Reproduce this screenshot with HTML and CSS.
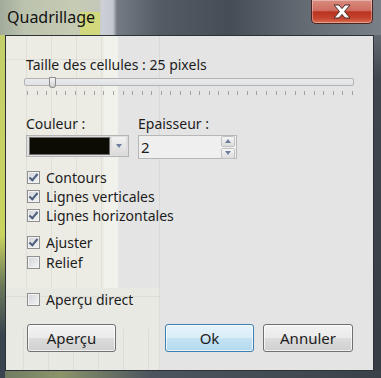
FILE: index.html
```html
<!DOCTYPE html>
<html lang="fr">
<head>
  <meta charset="UTF-8" />
  <title>Quadrillage</title>
  <link rel="stylesheet" href="styles.css">
</head>
<body>

  <div class="window">
    <div class="titlebar">
      <span class="title">Quadrillage</span>
      <div class="close">
        <svg width="22" height="15" viewBox="0 0 22 15">
          <path d="M3 1 L8 1 L11 4.6 L14 1 L19 1 L13.5 7.5 L19 14 L14 14 L11 10.4 L8 14 L3 14 L8.5 7.5 Z" fill="#fff" stroke="#4a2a26" stroke-width="1"/>
        </svg>
      </div>
    </div>

    <div class="client">
      <div class="label">Taille des cellules : 25 pixels</div>
      <div class="slider">
        <div class="track"></div>
        <div class="thumb"></div>
        <div class="ticks"></div>
      </div>

      <div class="fields">
        <div class="field color-field">
          <div class="label">Couleur :</div>
          <div class="combo">
            <div class="swatch"></div>
            <div class="drop"><span class="tri-down"></span></div>
          </div>
        </div>
        <div class="field">
          <div class="label">Epaisseur :</div>
          <div class="spin">
            <span class="value">2</span>
            <div class="spin-btns">
              <div class="spin-btn"><span class="tri-up"></span></div>
              <div class="spin-btn"><span class="tri-down"></span></div>
            </div>
          </div>
        </div>
      </div>

      <div class="checks">
        <label class="check"><span class="box on"></span>Contours</label>
        <label class="check"><span class="box on"></span>Lignes verticales</label>
        <label class="check"><span class="box on"></span>Lignes horizontales</label>
      </div>
      <div class="checks second">
        <label class="check"><span class="box on"></span>Ajuster</label>
        <label class="check"><span class="box"></span>Relief</label>
      </div>
      <div class="checks third">
        <label class="check"><span class="box"></span>Aperçu direct</label>
      </div>

      <div class="buttons">
        <button class="btn">Aperçu</button>
        <div class="right">
          <button class="btn default">Ok</button>
          <button class="btn">Annuler</button>
        </div>
      </div>
    </div>
  </div>

</body>
</html>
```

FILE: styles.css
```css
body {
  margin: 0;
  font-family: "Noto Sans", sans-serif;
  font-size: 14px;
  color: #1c1c1c;
}
.window {
  width: 381px;
  height: 378px;
  display: flex;
  flex-direction: column;
  background:
    linear-gradient(180deg, #c3cf6a 0, #c9d35e 200px, #6c7a5a 250px, #3a4450 300px) 0 35px / 5px 343px no-repeat,
    linear-gradient(90deg, #6f7a62 0, #8a946a 60px, #4c555d 150px, #3a4149 381px) 0 371px / 381px 7px no-repeat,
    linear-gradient(180deg, #7f858c 0, #3f464e 80px, #363d45 100%);
}
.titlebar {
  height: 35px;
  display: flex;
  align-items: flex-start;
  background:
    linear-gradient(#d2d87c, #d2d87c) 80px 12px / 20px 23px no-repeat,
    linear-gradient(90deg, #a2ab9c 0, #bcc3ae 25px, #c6cbb3 75px, #c4c8bb 100px, #cdd1d7 101px, #c3c7ce 113px, #747b83 117px, #535b64 160px, #454d56 230px, #626971 300px, #7a8088 381px);
}
.title {
  padding: 6px 0 0 7px;
  font-size: 16px;
  color: #111;
}
.close {
  margin-left: auto;
  margin-right: 8px;
  width: 60px;
  height: 23px;
  border: 1px solid #4a2420;
  border-top: none;
  border-radius: 0 0 5px 5px;
  box-shadow: inset 0 0 0 1px rgba(255, 255, 255, 0.35);
  background: linear-gradient(180deg, #d98a7e 0, #cf6f62 45%, #b9331f 52%, #c64530 80%, #dc6f52 100%);
  display: flex;
  align-items: center;
  justify-content: center;
}
.client {
  flex: 1;
  margin: 0 7px 7px 5px;
  border: 1px solid #2c3238;
  padding: 21px 20px 0 20px;
  display: flex;
  flex-direction: column;
  background:
    linear-gradient(rgba(255, 255, 255, 0.3), rgba(255, 255, 255, 0.3)) 98px 0 / 14px 252px no-repeat,
    repeating-linear-gradient(90deg, transparent 0 20px, rgba(0, 0, 0, 0.05) 20px 21px, transparent 21px 25px) 0 0 / 98px 252px no-repeat,
    linear-gradient(rgba(0, 0, 0, 0.05), rgba(0, 0, 0, 0.05)) 0 23px / 98px 1px no-repeat,
    linear-gradient(#ecece5, #ecece5) 0 0 / 112px 252px no-repeat,
    linear-gradient(rgba(0, 0, 0, 0.05), rgba(0, 0, 0, 0.05)) 0 260px / 154px 1px no-repeat,
    linear-gradient(rgba(0, 0, 0, 0.05), rgba(0, 0, 0, 0.05)) 153px 0 / 1px 335px no-repeat,
    repeating-linear-gradient(90deg, transparent 0 17px, rgba(0, 0, 0, 0.05) 17px 18px, transparent 18px 25px) 0 293px / 154px 42px no-repeat,
    linear-gradient(#e9e9e4, #e9e9e4) 0 252px / 154px 83px no-repeat,
    #e4e4e4;
}
.label {
  line-height: 16px;
}
.slider {
  position: relative;
  margin: 5px 0 0 -2px;
  width: 330px;
  height: 20px;
}
.track {
  height: 6px;
  border: 1px solid #b3b3b3;
  border-radius: 2px;
  background: linear-gradient(#e9ebec, #dfe2e4);
}
.thumb {
  position: absolute;
  left: 25px;
  top: -1px;
  width: 5px;
  height: 9px;
  border: 1px solid #8a8a8a;
  border-radius: 1px 1px 4px 4px;
  background: linear-gradient(#f4f4f4, #d2d2d2);
}
.ticks {
  margin: 5px 0 0 3px;
  width: 326px;
  height: 4px;
  background: repeating-linear-gradient(90deg, #a2a2a2 0 1px, transparent 1px 9.56px);
}
.fields {
  display: flex;
  gap: 9px;
  margin-top: 18px;
}
.field .label {
  margin-bottom: 3px;
}
.combo {
  width: 98px;
  height: 20px;
  border: 1px solid #b4b4b4;
  display: flex;
  align-items: center;
  padding: 0 1px 0 2px;
  background: #dedede;
}
.swatch {
  width: 79px;
  height: 16px;
  background: #0d0c04;
  border: 1px solid #6e6e6e;
}
.drop {
  margin-left: 2px;
  width: 14px;
  height: 18px;
  background: linear-gradient(#f2f2f2, #dadada);
  display: flex;
  align-items: center;
  justify-content: center;
}
.tri-down {
  width: 0;
  height: 0;
  border-left: 3.5px solid transparent;
  border-right: 3.5px solid transparent;
  border-top: 4px solid #6d7f9c;
}
.tri-up {
  width: 0;
  height: 0;
  border-left: 3.5px solid transparent;
  border-right: 3.5px solid transparent;
  border-bottom: 4px solid #6d7f9c;
}
.spin {
  width: 97px;
  height: 22px;
  border: 1px solid #b7b7b7;
  background: #efefef;
  display: flex;
  align-items: center;
}
.value {
  padding-left: 2px;
  font-size: 15px;
  flex: 1;
}
.spin-btns {
  display: flex;
  flex-direction: column;
  margin-right: 1px;
  gap: 1px;
}
.spin-btn {
  width: 12px;
  height: 9px;
  border: 1px solid #c2c2c2;
  border-radius: 2px;
  background: linear-gradient(#f6f6f6, #dcdcdc);
  display: flex;
  align-items: center;
  justify-content: center;
}
.checks {
  display: flex;
  flex-direction: column;
  margin-top: 9px;
}
.checks.second {
  margin-top: 7px;
}
.checks.second .check {
  height: 20px;
}
.checks.third {
  margin-top: 18px;
}
.check {
  height: 19px;
  display: flex;
  align-items: center;
}
.box {
  width: 11px;
  height: 11px;
  margin: 0 6px 0 1px;
  border: 1px solid #8e8f8f;
  background: linear-gradient(135deg, #d0d3d8, #f4f4f4);
  box-shadow: inset 0 0 0 1px #f2f2f2;
  position: relative;
}
.box.on::after {
  content: "";
  position: absolute;
  left: 3px;
  top: 0px;
  width: 3px;
  height: 7px;
  border-right: 2px solid #4b5e7e;
  border-bottom: 2px solid #4b5e7e;
  transform: rotate(40deg);
}
.buttons {
  display: flex;
  margin-top: 15px;
  margin-left: 1px;
}
.right {
  display: flex;
  gap: 9px;
  margin-left: 49px;
}
.btn {
  width: 90px;
  height: 28px;
  font-family: "Noto Sans", sans-serif;
  font-size: 15px;
  color: #1c1c1c;
  border: 1px solid #707070;
  border-radius: 3px;
  box-shadow: inset 0 0 0 1px rgba(255, 255, 255, 0.7);
  background: linear-gradient(180deg, #f2f2f2 0, #ebebeb 48%, #dcdcdc 52%, #cfcfcf 100%);
}
.btn.default {
  width: 89px;
  border-color: #3c7fb1;
  background: linear-gradient(180deg, #e6f3fa 0, #daedf8 48%, #c5e3f3 52%, #b3d9ee 100%);
}
```
